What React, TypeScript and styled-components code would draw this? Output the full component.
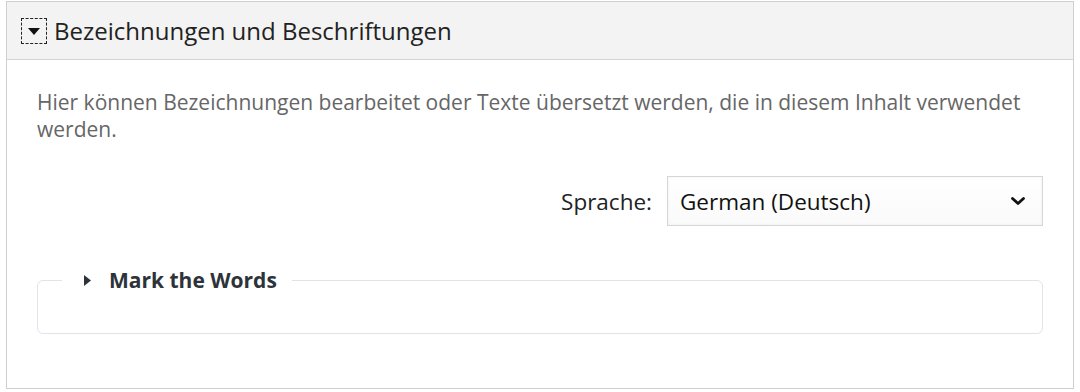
import React from 'react';
import styled, { createGlobalStyle } from 'styled-components';

const Global = createGlobalStyle`
  html, body { margin: 0; padding: 0; background: #fff; }
  body { font-family: 'Open Sans', 'Noto Sans', sans-serif; }
  * { box-sizing: border-box; }
`;

const Page = styled.div`
  padding: 1px 0 0 6px;
`;

const Panel = styled.section`
  width: 1068px;
  height: 388px;
  border: 1px solid #cfcfcf;
  background: #fff;
`;

const Header = styled.div`
  height: 58px;
  background: #f3f3f3;
  border-bottom: 1px solid #d4d4d4;
  display: flex; align-items: center;
  padding: 0 0 0 14px;
  gap: 7px;
`;

const Toggle = styled.button`
  width: 26px; height: 26px;
  border: 1px dashed #222;
  background: transparent;
  padding: 0;
  display: flex; align-items: center; justify-content: center;
  margin-top: 1px;
`;

const Title = styled.h2`
  margin: 0;
  font-size: 24px;
  font-weight: 400;
  color: #222;
  line-height: 1;
`;

const Body = styled.div`
  padding: 29px 30px 0 30px;
`;

const Desc = styled.p`
  margin: 0;
  font-size: 21px;
  line-height: 27px;
  color: #666;
`;

const LangRow = styled.div`
  display: flex; align-items: center; justify-content: flex-end;
  gap: 15px;
  margin-top: 33px;
`;

const Label = styled.label`
  font-size: 22.5px;
  color: #222;
`;

const Select = styled.div`
  width: 376px; height: 50px;
  border: 1px solid #d6d6d6;
  background: linear-gradient(#fff, #fafafa);
  box-shadow: inset 0 0 3px rgba(0,0,0,0.06);
  display: flex; align-items: center; justify-content: space-between;
  padding: 0 16px 0 12px;
  font-size: 22.5px;
  color: #111;
`;

const Fieldset = styled.fieldset`
  margin: 40px 0 0 0;
  padding: 0;
  border: 1px solid #e3e2ea;
  border-radius: 6px;
`;

const Legend = styled.legend`
  margin-left: 24px;
  padding: 0 15px 0 22px;
  display: flex; align-items: center; gap: 18px;
  font-size: 21px;
  line-height: 29px;
  font-weight: 700;
  color: #2d3338;
`;

const FieldContent = styled.div`
  height: 38px;
`;

const App: React.FC = () => (
  <Page>
    <Global />
    <Panel>
      <Header>
        <Toggle>
          <svg width="12" height="7" viewBox="0 0 12 7"><path d="M0 0H12L6 7Z" fill="#111" /></svg>
        </Toggle>
        <Title>Bezeichnungen und Beschriftungen</Title>
      </Header>
      <Body>
        <Desc>
          Hier können Bezeichnungen bearbeitet oder Texte übersetzt werden, die in diesem Inhalt verwendet werden.
        </Desc>
        <LangRow>
          <Label>Sprache:</Label>
          <Select>
            <span>German (Deutsch)</span>
            <svg width="16" height="10" viewBox="0 0 16 10">
              <path d="M2.5 2.5L8 7.5L13.5 2.5" stroke="#111" strokeWidth="2.8" fill="none" strokeLinecap="round" strokeLinejoin="round" />
            </svg>
          </Select>
        </LangRow>
        <Fieldset>
          <Legend>
            <svg width="7" height="11" viewBox="0 0 7 11"><path d="M0 0L7 5.5L0 11Z" fill="#2d3338" /></svg>
            Mark the Words
          </Legend>
          <FieldContent />
        </Fieldset>
      </Body>
    </Panel>
  </Page>
);

export default App;
